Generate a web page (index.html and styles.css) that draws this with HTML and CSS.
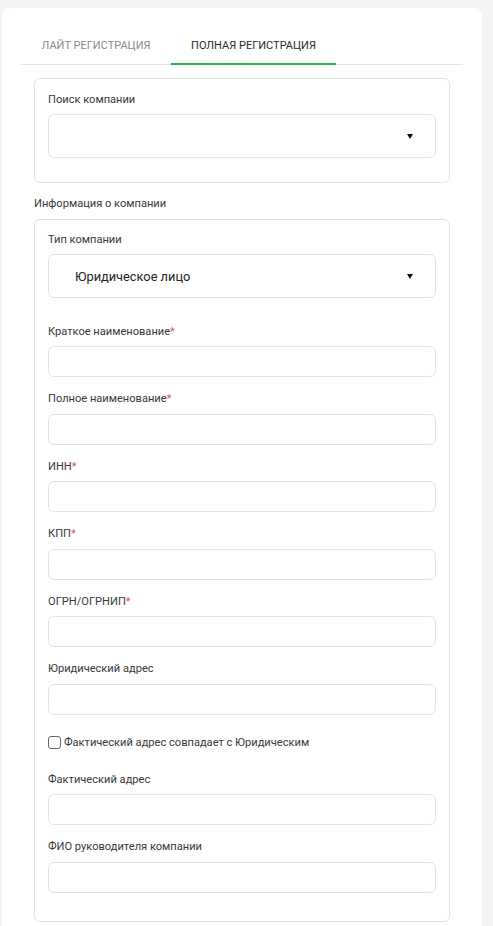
FILE: index.html
```html
<!DOCTYPE html>
<html lang="ru">
<head>
<meta charset="utf-8">
<title>Регистрация</title>
<link rel="stylesheet" href="styles.css">
</head>
<body>
<div class="card">
  <div class="tabs">
    <div class="tab">ЛАЙТ РЕГИСТРАЦИЯ</div>
    <div class="tab active">ПОЛНАЯ РЕГИСТРАЦИЯ</div>
  </div>
  <div class="content">
    <div class="box search-box">
      <div class="label">Поиск компании</div>
      <div class="select"><span class="select-text"></span><span class="arrow"></span></div>
    </div>
    <div class="section-title">Информация о компании</div>
    <div class="box info-box">
      <div class="label">Тип компании</div>
      <div class="select"><span class="select-text">Юридическое лицо</span><span class="arrow"></span></div>

      <div class="field first">
        <div class="label">Краткое наименование<span class="req">*</span></div>
        <div class="input"></div>
      </div>
      <div class="field">
        <div class="label">Полное наименование<span class="req">*</span></div>
        <div class="input"></div>
      </div>
      <div class="field">
        <div class="label">ИНН<span class="req">*</span></div>
        <div class="input"></div>
      </div>
      <div class="field">
        <div class="label">КПП<span class="req">*</span></div>
        <div class="input"></div>
      </div>
      <div class="field">
        <div class="label">ОГРН/ОГРНИП<span class="req">*</span></div>
        <div class="input"></div>
      </div>
      <div class="field">
        <div class="label">Юридический адрес</div>
        <div class="input"></div>
      </div>
      <label class="check-row"><span class="checkbox"></span>Фактический адрес совпадает с Юридическим</label>
      <div class="field">
        <div class="label">Фактический адрес</div>
        <div class="input"></div>
      </div>
      <div class="field">
        <div class="label">ФИО руководителя компании</div>
        <div class="input"></div>
      </div>
    </div>
  </div>
</div>
</body>
</html>
```
FILE: styles.css
```css
html, body {
  margin: 0;
  padding: 0;
  background: #f4f4f4;
  font-family: Roboto, "Liberation Sans", Arial, sans-serif;
  color: #333;
}
.card {
  margin: 8px 0 0 2px;
  width: 442px;
  min-height: 940px;
  background: #fff;
  border-radius: 7px 7px 0 0;
  padding: 20px 19px 0 19px;
}
.tabs {
  display: flex;
  border-bottom: 1px solid #e2e2e2;
  height: 36px;
}
.tab {
  font-size: 11px;
  color: #8a8a8a;
  text-align: center;
  line-height: 36px;
  width: 150px;
  box-sizing: border-box;
}
.tab.active {
  width: 165px;
  color: #2b2b2b;
  border-bottom: 2px solid #2fb23e;
  margin-bottom: -1px;
  line-height: 35px;
}
.content {
  padding: 13px 13px 0 13px;
}
.box {
  border: 1px solid #e3e3e3;
  border-radius: 6px;
  padding: 0 13px;
}
.search-box {
  padding-top: 13px;
  padding-bottom: 24px;
}
.label {
  font-size: 11.1px;
  line-height: 15.5px;
  color: #383838;
}
.req {
  color: #e8485a;
}
.select {
  margin-top: 6.5px;
  height: 44px;
  box-sizing: border-box;
  border: 1px solid #e3e3e3;
  border-radius: 6px;
  display: flex;
  align-items: center;
  padding: 0 22px 0 26px;
}
.select-text {
  flex: 1;
  font-size: 12.8px;
  color: #222;
}
.arrow {
  width: 0;
  height: 0;
  border-left: 3px solid transparent;
  border-right: 3px solid transparent;
  border-top: 5px solid #111;
}
.section-title {
  font-size: 11.1px;
  line-height: 16px;
  margin: 13px 0 7px 0;
  color: #383838;
}
.info-box {
  padding-top: 12px;
  padding-bottom: 28px;
}
.field {
  margin-top: 14px;
}
.field.first {
  margin-top: 25.5px;
}
.input {
  margin-top: 7px;
  height: 31px;
  box-sizing: border-box;
  border: 1px solid #e3e3e3;
  border-radius: 6px;
}
.check-row {
  display: flex;
  align-items: center;
  gap: 3px;
  font-size: 11.1px;
  line-height: 16px;
  color: #383838;
  margin: 20px 0 21px 0;
}
.checkbox {
  width: 11px;
  height: 11px;
  border: 1px solid #666;
  border-radius: 3px;
  display: inline-block;
  background: #fff;
}
```
